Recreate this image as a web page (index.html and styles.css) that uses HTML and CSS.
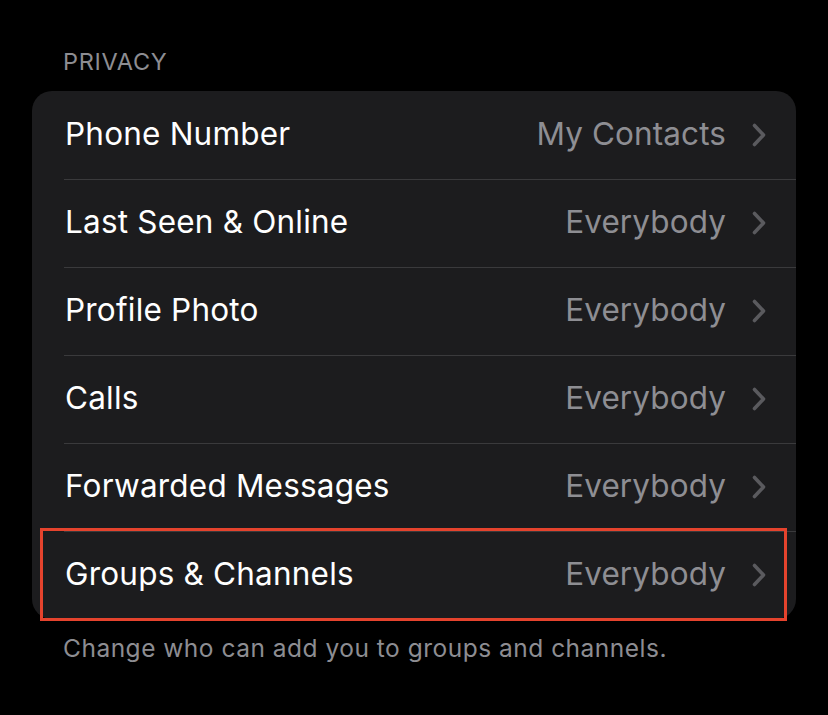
FILE: index.html
```html
<!DOCTYPE html>
<html>
<head>
<meta charset="utf-8">
<link rel="stylesheet" href="styles.css">
</head>
<body>
<div class="page">
  <div class="section-header">PRIVACY</div>
  <div class="card">
    <div class="row"><span class="label">Phone Number</span><span class="value">My Contacts</span><svg class="chev" viewBox="0 0 14 24"><path d="M2.5 2.5 L11.5 12 L2.5 21.5" fill="none" stroke="currentColor" stroke-width="3.6" stroke-linecap="round" stroke-linejoin="round"/></svg></div>
    <div class="row"><span class="label">Last Seen &amp; Online</span><span class="value">Everybody</span><svg class="chev" viewBox="0 0 14 24"><path d="M2.5 2.5 L11.5 12 L2.5 21.5" fill="none" stroke="currentColor" stroke-width="3.6" stroke-linecap="round" stroke-linejoin="round"/></svg></div>
    <div class="row"><span class="label">Profile Photo</span><span class="value">Everybody</span><svg class="chev" viewBox="0 0 14 24"><path d="M2.5 2.5 L11.5 12 L2.5 21.5" fill="none" stroke="currentColor" stroke-width="3.6" stroke-linecap="round" stroke-linejoin="round"/></svg></div>
    <div class="row"><span class="label">Calls</span><span class="value">Everybody</span><svg class="chev" viewBox="0 0 14 24"><path d="M2.5 2.5 L11.5 12 L2.5 21.5" fill="none" stroke="currentColor" stroke-width="3.6" stroke-linecap="round" stroke-linejoin="round"/></svg></div>
    <div class="row"><span class="label">Forwarded Messages</span><span class="value">Everybody</span><svg class="chev" viewBox="0 0 14 24"><path d="M2.5 2.5 L11.5 12 L2.5 21.5" fill="none" stroke="currentColor" stroke-width="3.6" stroke-linecap="round" stroke-linejoin="round"/></svg></div>
    <div class="row highlighted"><span class="label">Groups &amp; Channels</span><span class="value">Everybody</span><svg class="chev" viewBox="0 0 14 24"><path d="M2.5 2.5 L11.5 12 L2.5 21.5" fill="none" stroke="currentColor" stroke-width="3.6" stroke-linecap="round" stroke-linejoin="round"/></svg><div class="highlight-box"></div></div>
  </div>
  <div class="section-footer">Change who can add you to groups and channels.</div>
</div>
</body>
</html>
```

FILE: styles.css
```css
html, body {
  margin: 0;
  padding: 0;
  background: #000;
  height: 100%;
}
body {
  font-family: Inter, "Noto Sans", sans-serif;
  -webkit-font-smoothing: antialiased;
}
.page {
  padding: 47px 32px 0 32px;
}
.section-header {
  color: #8d8d92;
  font-size: 23.5px;
  line-height: 30px;
  padding-left: 31px;
  margin-bottom: 14px;
  letter-spacing: 0.7px;
}
.card {
  background: #1c1c1e;
  border-radius: 20px;
}
.row {
  position: relative;
  display: flex;
  align-items: center;
  height: 88px;
  padding-left: 33px;
  padding-right: 30px;
  box-sizing: border-box;
}
.row + .row::before {
  content: "";
  position: absolute;
  top: 0;
  left: 32px;
  right: 0;
  height: 1px;
  background: #3a3a3c;
}
.label {
  color: #fff;
  font-size: 31.5px;
  letter-spacing: 0.2px;
  flex: 1;
  margin-top: -3px;
}
.value {
  color: #8e8e93;
  font-size: 31.5px;
  letter-spacing: 0.1px;
  margin-right: 26px;
  margin-top: -3px;
}
.chev {
  width: 14px;
  height: 24px;
  color: #5a5a5e;
}
.highlight-box {
  position: absolute;
  left: 8px;
  top: -3px;
  width: 747px;
  height: 93px;
  box-sizing: border-box;
  border: 3.5px solid #e5432d;
}
.section-footer {
  color: #8d8d92;
  font-size: 24.5px;
  letter-spacing: 0.5px;
  padding-left: 31px;
  margin-top: 14px;
}
```
